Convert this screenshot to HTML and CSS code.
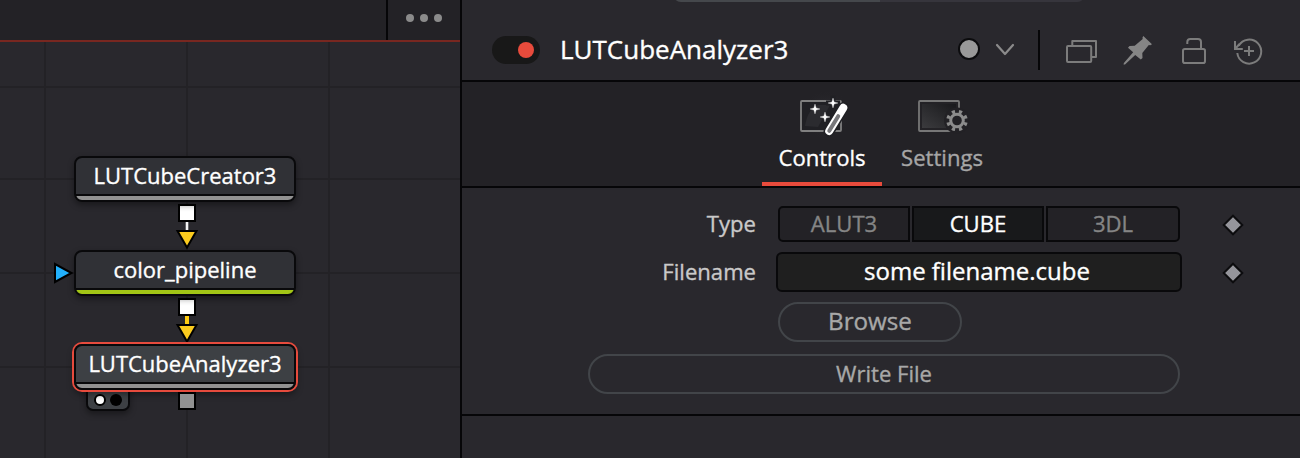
FILE: index.html
```html
<!DOCTYPE html>
<html lang="en">
<head>
<meta charset="utf-8">
<title>LUTCubeAnalyzer3</title>
<link rel="stylesheet" href="styles.css">
</head>
<body>
<div class="app">
  <section class="flow">
    <div class="flow-bar">
      <button class="more" aria-label="More"><i></i><i></i><i></i></button>
    </div>
    <div class="canvas">
      <svg class="wires" width="460" height="416" viewBox="0 42 460 416">
        <g fill="#232226">
          <path d="M44 42h2v416h-2zM186 42h2v416h-2zM328 42h2v416h-2z"/>
          <path d="M0 86h460v2H0zM0 178h460v2H0zM0 272h460v2H0zM0 366h460v2H0z"/>
        </g>
        <path d="M187 221v11" stroke="#f4f4f4" stroke-width="2.6"/>
        <path d="M187 315v11" stroke="#fc1" stroke-width="4"/>
        <g stroke="#000" stroke-width="2">
          <path d="M177.500 231h19l-9.500 16.500zM177.500 325h19l-9.500 16.500z" fill="#fbcb1e"/>
          <path d="M55 264v18l16.500-9z" fill="#22b0fc"/>
          <path d="M179 205h16v16h-16zM179 299h16v16h-16z" fill="#fff"/>
        </g>
      </svg>
      <div class="node creator"><span>LUTCubeCreator3</span></div>
      <div class="node pipeline"><span>color_pipeline</span></div>
      <div class="views"><i class="on"></i><i></i></div>
      <div class="node analyzer"><span>LUTCubeAnalyzer3</span></div>
      <div class="out-port"></div>
    </div>
  </section>

  <section class="inspector">
    <header class="head">
      <div class="scroll-hint"></div>
      <div class="toggle"><i></i></div>
      <h1>LUTCubeAnalyzer3</h1>
      <svg class="tools" width="310" height="60" viewBox="950 20 310 60" fill="none" stroke="#7c7c7c" stroke-width="2">
        <circle cx="969" cy="49" r="10" fill="#999" stroke="#0c0c0e"/>
        <path d="M997 45l8 9 8-9" stroke="#8b8b8b" stroke-width="2.200" stroke-linecap="round" stroke-linejoin="round"/>
        <path d="M1039 30v40" stroke="#060608"/>
        <g stroke-width="2" stroke-linejoin="round">
          <path d="M1072.300 45v-4h23.700v16h-4"/>
          <rect x="1067" y="46" width="24.200" height="16" rx="1"/>
        </g>
        <path d="M1143.300 36l8.700 8.200-1.700 1-1.500-.3-6.500 8.200.2 4.800-1.700 1.700-5.600-4.700-10.200 9.700-1.500-.2.400-1.500 9.300-10.700-5.200-4.500 1.500-1.700 5.200-.3 8-6.700-.2-1.600z" fill="#858585" stroke="none"/>
        <g stroke-width="2">
          <rect x="1183" y="49" width="22" height="14" rx="1.800"/>
          <path d="M1187.300 44v-2a3 3 0 0 1 3-3h7.700a3 3 0 0 1 3 3v7"/>
        </g>
        <g stroke-width="2">
          <path d="M1238.700 45.800a12 12 0 1 1-1.400 7.200"/>
          <path d="M1235 41v8h7.800M1235.500 48.500l4-4.500"/>
          <path d="M1249 46v10M1244 51h10"/>
        </g>
      </svg>
    </header>

    <nav class="tabs">
      <a class="tab active">
        <svg width="64" height="50" viewBox="790 90 64 50">
          <defs>
            <radialGradient id="glow"><stop offset="0" stop-color="#46454a" stop-opacity=".7"/><stop offset="1" stop-color="#232226" stop-opacity="0"/></radialGradient>
            <linearGradient id="screen" x1="0" y1="1" x2="1" y2="0"><stop offset="0" stop-color="#3b3b3e"/><stop offset="1" stop-color="#19191c"/></linearGradient>
          </defs>
          <circle cx="826" cy="115" r="25" fill="url(#glow)"/>
          <rect x="801" y="101" width="40" height="30" rx="1" fill="#202024" stroke="#808080" stroke-width="1.800"/>
          <path d="M805 126c2-11 5-17 13-21h12l-12 22z" fill="#2b2b2f"/>
          <path d="M843.500 107.500L829 131.500" stroke="#202024" stroke-width="11" stroke-linecap="round"/>
          <path d="M833 95.500v15M826 103h14" stroke="#202024" stroke-width="5"/>
          <path d="M843.300 107.800L829.200 131" stroke="#fff" stroke-width="8" stroke-linecap="round"/>
          <path d="M838.200 116.200L829.300 130.800" stroke="#77777a" stroke-width="4" stroke-linecap="round"/>
          <path d="M815 104l1.100 3.900 3.900 1.100-3.900 1.100L815 114l-1.100-3.900-3.900-1.100 3.900-1.100zM833 98l1.100 3.900 3.900 1.100-3.900 1.100L833 108l-1.100-3.900-3.900-1.100 3.900-1.100zM825 112l1.100 3.900 3.900 1.100-3.900 1.100L825 122l-1.100-3.900-3.900-1.100 3.900-1.100z" fill="#fff" stroke="#fff" stroke-width=".3"/>
        </svg>
        <span>Controls</span>
      </a>
      <a class="tab">
        <svg width="64" height="50" viewBox="910 90 64 50">
          <rect x="919" y="101" width="40" height="30" rx="1" fill="#232226" stroke="#777" stroke-width="1.800"/>
          <rect x="922" y="104" width="34" height="24" fill="url(#screen)"/>
          <circle cx="957" cy="120.500" r="13" fill="#222125"/>
          <g fill="none" stroke="#8c8c8c">
            <circle cx="957" cy="120.500" r="6.300" stroke-width="3"/>
            <circle cx="957" cy="120.500" r="9" stroke-width="3.600" pathLength="80" stroke-dasharray="4.500 5.500" stroke-dashoffset="-2.700"/>
          </g>
        </svg>
        <span>Settings</span>
      </a>
    </nav>

    <div class="form">
      <div class="row type-row">
        <label>Type</label>
        <div class="choices">
          <button class="choice first">ALUT3</button>
          <button class="choice chosen">CUBE</button>
          <button class="choice last">3DL</button>
        </div>
        <svg class="key" width="22" height="22" viewBox="-11 -11 22 22"><path d="M0-9.300L9.300 0 0 9.300-9.300 0z" fill="#95959b" stroke="#0c0c0e" stroke-width="2"/></svg>
      </div>
      <div class="row file-row">
        <label>Filename</label>
        <div class="field">some filename.cube</div>
        <svg class="key" width="22" height="22" viewBox="-11 -11 22 22"><path d="M0-9.300L9.300 0 0 9.300-9.300 0z" fill="#95959b" stroke="#0c0c0e" stroke-width="2"/></svg>
      </div>
      <button class="pill browse">Browse</button>
      <button class="pill write">Write File</button>
    </div>
  </section>
</div>
</body>
</html>
```
FILE: styles.css
```css
* { box-sizing: border-box; }
body {
  margin: 0;
  background: #29282d;
  font-family: "Open Sans", "Noto Sans", sans-serif;
  font-size: 22.1px;
  line-height: 30px;
  color: #fff;
  -webkit-text-stroke: .35px;
}
button {
  font: inherit;
  color: inherit;
  background: none;
  border: 0;
  padding: 0;
}
svg { display: block; flex: none; }
.app { display: flex; width: 1300px; height: 458px; overflow: hidden; }

/* node flow */
.flow { width: 462px; flex: none; border-right: 2px solid #060608; }
.flow-bar {
  height: 42px;
  display: flex;
  justify-content: flex-end;
  background: #232226;
  border-bottom: 2px solid #782720;
}
.more {
  width: 74px;
  display: flex;
  align-items: center;
  gap: 6px;
  padding: 0 0 4px 18px;
  border-left: 2px solid #060608;
}
.more i { width: 8px; height: 8px; border-radius: 50%; background: #8b8b8b; }
.canvas { position: relative; height: 416px; }
.node {
  position: absolute;
  left: 74px;
  width: 222px;
  height: 46px;
  border: 2px solid #09090b;
  border-radius: 8px;
  background: linear-gradient(var(--face, #303136) 0 36px, #09090b 36px 38px, var(--strip) 38px);
  box-shadow: 0 3px 6px rgba(0, 0, 0, .4);
  text-align: center;
  font-size: 22px;
}
.node span { display: block; line-height: 35px; }
.creator { top: 114px; --strip: #929292; }
.pipeline { top: 208px; --strip: #a2c516; }
.analyzer {
  top: 302px;
  --strip: #929292;
  --face: #3d4044;
  box-shadow: 0 0 0 2px #e64b3d, 0 4px 7px rgba(0, 0, 0, .45);
}
.views {
  position: absolute;
  left: 86px;
  top: 340px;
  width: 44px;
  height: 29px;
  padding: 10px 6px 0;
  display: flex;
  gap: 4px;
  border: 2px solid #09090b;
  border-radius: 7px;
  background: #3d4044;
  box-shadow: 0 3px 6px rgba(0, 0, 0, .4);
}
.views i { width: 12px; height: 12px; border-radius: 50%; background: #000; flex: none; }
.views .on { background: #fff; border: 2px solid #000; }
.out-port {
  position: absolute;
  left: 178px;
  top: 350px;
  width: 18px;
  height: 18px;
  background: #929292;
  border: 2px solid #000;
}

/* inspector */
.inspector { width: 838px; }
.head {
  position: relative;
  height: 82px;
  display: flex;
  align-items: flex-start;
  border-bottom: 2px solid #060608;
}
.scroll-hint {
  position: absolute;
  left: 211px;
  top: -6px;
  width: 412px;
  height: 8px;
  border-radius: 0 0 8px 8px;
  background: linear-gradient(90deg, #45484c 207px, #36353c 207px);
}
.toggle {
  width: 48px;
  height: 28px;
  margin: 36px 0 0 30px;
  padding: 6px;
  border-radius: 14px;
  background: #181818;
  display: flex;
  justify-content: flex-end;
}
.toggle i { width: 16px; height: 16px; border-radius: 50%; background: #e84b3c; }
.head h1 {
  width: 390px;
  margin: 31px 0 0 20px;
  font-size: 26px;
  font-weight: 400;
  line-height: 36px;
}
.tools { margin-top: 20px; overflow: visible; }
.tabs {
  height: 106px;
  padding-left: 300px;
  display: flex;
  background: #232226;
  border-bottom: 2px solid #060608;
}
.tab {
  width: 120px;
  display: flex;
  flex-direction: column;
  align-items: center;
  padding-top: 8px;
  color: #a6a6a6;
}
.tab span { margin-top: 2px; }
.active { color: #fff; border-bottom: 4px solid #e84b3c; }

.form {
  height: 228px;
  padding-top: 18px;
  border-bottom: 2px solid #060608;
}
.row { display: flex; align-items: flex-start; }
.row label { width: 294px; text-align: right; color: #c9c9c9; }
.key { margin-left: 42px; }
.type-row label { margin-top: 2px; }
.type-row .key { margin-top: 8px; }
.choices { display: flex; gap: 2px; width: 402px; margin-left: 22px; }
.choice {
  width: 132px;
  height: 36px;
  padding-bottom: 2px;
  border: 2px solid #09090b;
  background: #232226;
  color: #858585;
}
.first { border-radius: 5px 0 0 5px; }
.last { width: 134px; border-radius: 0 5px 5px 0; }
.chosen { background: #18191b; color: #fff; }
.file-row { margin-top: 10px; }
.file-row label { margin-top: 4px; }
.field {
  width: 406px;
  height: 40px;
  margin-left: 20px;
  padding-right: 4px;
  border: 2px solid #09090b;
  border-radius: 6px;
  background: #1f1f1f;
  font-size: 24px;
  line-height: 34px;
  text-align: center;
}
.file-row .key { margin: 10px 0 0 40px; }
.pill {
  display: block;
  height: 40px;
  padding-bottom: 2px;
  border: 2px solid #424549;
  border-radius: 20px;
  color: #a8a8a8;
}
.browse { width: 184px; margin: 10px 0 0 316px; font-size: 24.2px; }
.write { width: 592px; margin: 12px 0 0 126px; }
```
